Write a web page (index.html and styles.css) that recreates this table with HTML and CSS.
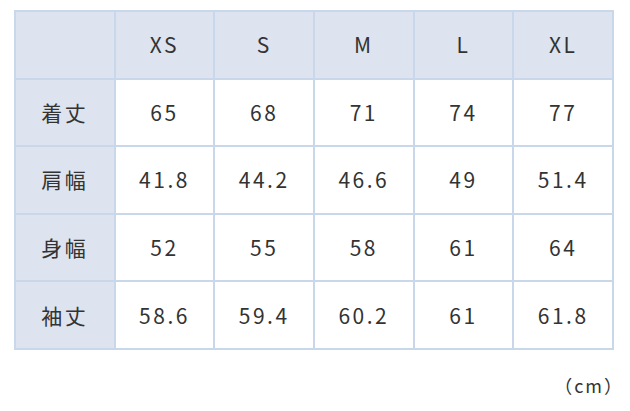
FILE: index.html
```html
<!DOCTYPE html>
<html lang="ja">
<head>
<meta charset="utf-8">
<link rel="stylesheet" href="styles.css">
</head>
<body>
<div class="wrap">
<table class="size">
<thead>
<tr><th class="corner"></th><th>XS</th><th>S</th><th>M</th><th>L</th><th>XL</th></tr>
</thead>
<tbody>
<tr><th>着丈</th><td>65</td><td>68</td><td>71</td><td>74</td><td>77</td></tr>
<tr><th>肩幅</th><td>41.8</td><td>44.2</td><td>46.6</td><td>49</td><td>51.4</td></tr>
<tr><th>身幅</th><td>52</td><td>55</td><td>58</td><td>61</td><td>64</td></tr>
<tr><th>袖丈</th><td>58.6</td><td>59.4</td><td>60.2</td><td>61</td><td>61.8</td></tr>
</tbody>
</table>
<p class="unit">（cm）</p>
</div>
</body>
</html>
```
FILE: styles.css
```css
html, body {
  margin: 0;
  padding: 0;
  background: #ffffff;
}
.wrap {
  padding: 10px 16px 0 14px;
  font-family: "Noto Sans CJK JP", "Noto Sans", sans-serif;
  color: #333333;
}
.size {
  border-collapse: collapse;
  table-layout: fixed;
  width: 600px;
}
.size th, .size td {
  border: 2px solid #c9d7eb;
  height: 65.6px;
  padding: 0;
  text-align: center;
  vertical-align: middle;
  font-size: 21px;
  font-weight: 400;
  letter-spacing: 2.5px;
  line-height: 1;
}
.size th {
  background: #dde4ef;
}
.size td {
  background: #ffffff;
}
.unit {
  margin: 22px -10px 0 0;
  text-align: right;
  font-size: 18px;
  letter-spacing: 2px;
}
```
